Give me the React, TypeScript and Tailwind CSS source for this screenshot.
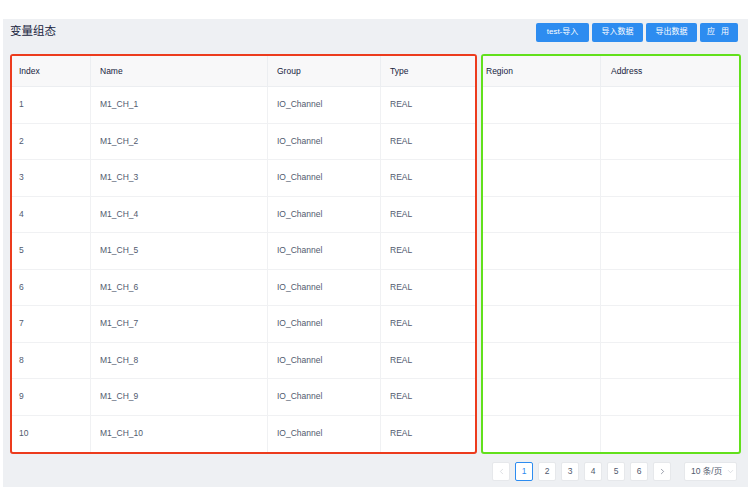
import { ChevronLeft, ChevronRight, ChevronDown } from 'lucide-react';

const rows = Array.from({ length: 10 }, (_, i) => ({
  index: i + 1,
  name: `M1_CH_${i + 1}`,
  group: 'IO_Channel',
  type: 'REAL',
}));

const font = { fontFamily: '"Liberation Sans", "Noto Sans CJK SC", sans-serif' };

export default function App() {
  return (
    <div className="w-[756px] h-[487px] bg-white pt-[19px] pl-[3px] pr-[8px] overflow-hidden" style={font}>
      <div className="h-full bg-[#eef0f3] px-[7px] flex flex-col">
        {/* Header */}
        <div className="h-[26px] mb-[9px] flex items-center justify-between">
          <h1 className="text-[11.5px] text-[#17233d] font-normal">变量组态</h1>
          <div className="flex gap-[3px] mr-[3px]">
            <button className="w-[53px] h-[19px] bg-[#2d8cf0] text-white text-[8px] rounded-[2px]">test-导入</button>
            <button className="w-[51px] h-[19px] bg-[#2d8cf0] text-white text-[8px] rounded-[2px]">导入数据</button>
            <button className="w-[51px] h-[19px] bg-[#2d8cf0] text-white text-[8px] rounded-[2px]">导出数据</button>
            <button className="w-[38px] h-[19px] bg-[#2d8cf0] text-white text-[8px] rounded-[2px] tracking-[2px]">应 用</button>
          </div>
        </div>

        {/* Tables */}
        <div className="flex gap-[4px]">
          <div className="w-[467px] border-2 border-[#ec3b1d] rounded-[3px] bg-white overflow-hidden">
            <div className="h-[31px] flex items-center bg-[#f8f8f9] border-b border-[#eceef1] text-[8.5px] text-[#17233d]">
              <div className="w-[79px] h-full flex items-center pl-[7px] border-r border-[#eceef1]">Index</div>
              <div className="w-[177px] h-full flex items-center pl-[9px] border-r border-[#eceef1]">Name</div>
              <div className="w-[113px] h-full flex items-center pl-[9px] border-r border-[#eceef1]">Group</div>
              <div className="flex-1 h-full flex items-center pl-[9px]">Type</div>
            </div>
            {rows.map((r, i) => (
              <div
                key={r.index}
                className={`h-[36.5px] flex items-center text-[8.5px] text-[#515a6e] ${i < rows.length - 1 ? 'border-b border-[#f0f1f3]' : ''}`}
              >
                <div className="w-[79px] h-full flex items-center pl-[7px] border-r border-[#f0f1f3]">{r.index}</div>
                <div className="w-[177px] h-full flex items-center pl-[9px] border-r border-[#f0f1f3]">{r.name}</div>
                <div className="w-[113px] h-full flex items-center pl-[9px] border-r border-[#f0f1f3]">{r.group}</div>
                <div className="flex-1 h-full flex items-center pl-[9px]">{r.type}</div>
              </div>
            ))}
          </div>

          <div className="flex-1 border-2 border-[#62e01c] rounded-[3px] bg-white overflow-hidden">
            <div className="h-[31px] flex items-center bg-[#f8f8f9] border-b border-[#eceef1] text-[8.5px] text-[#17233d]">
              <div className="w-[118px] h-full flex items-center pl-[3px] border-r border-[#eceef1]">Region</div>
              <div className="flex-1 h-full flex items-center pl-[10px]">Address</div>
            </div>
            {rows.map((r, i) => (
              <div
                key={r.index}
                className={`h-[36.5px] flex ${i < rows.length - 1 ? 'border-b border-[#f0f1f3]' : ''}`}
              >
                <div className="w-[118px] h-full border-r border-[#f0f1f3]" />
                <div className="flex-1 h-full" />
              </div>
            ))}
          </div>
        </div>

        {/* Pagination */}
        <div className="mt-[8px] h-[19px] flex justify-end items-center pr-[4px] text-[8.5px] text-[#515a6e]">
          <div className="flex gap-[5px]">
            <div className="w-[18px] h-[19px] bg-white border border-[#e6e8eb] rounded-[2px] flex items-center justify-center text-[#c5c8ce]">
              <ChevronLeft size={9} strokeWidth={1.5} />
            </div>
            {[1, 2, 3, 4, 5, 6].map((n) => (
              <div
                key={n}
                className={`w-[18px] h-[19px] bg-white border rounded-[2px] flex items-center justify-center ${n === 1 ? 'border-[#2d8cf0] text-[#2d8cf0]' : 'border-[#e6e8eb]'}`}
              >
                {n}
              </div>
            ))}
            <div className="w-[18px] h-[19px] bg-white border border-[#e6e8eb] rounded-[2px] flex items-center justify-center text-[#515a6e]">
              <ChevronRight size={9} strokeWidth={1.5} />
            </div>
          </div>
          <div className="ml-[13px] w-[53px] h-[19px] bg-white border border-[#e6e8eb] rounded-[2px] flex items-center pl-[6px] gap-[4px]">
            <span>10 条/页</span>
            <ChevronDown size={9} strokeWidth={1.5} className="text-[#c5c8ce]" />
          </div>
        </div>
      </div>
    </div>
  );
}
